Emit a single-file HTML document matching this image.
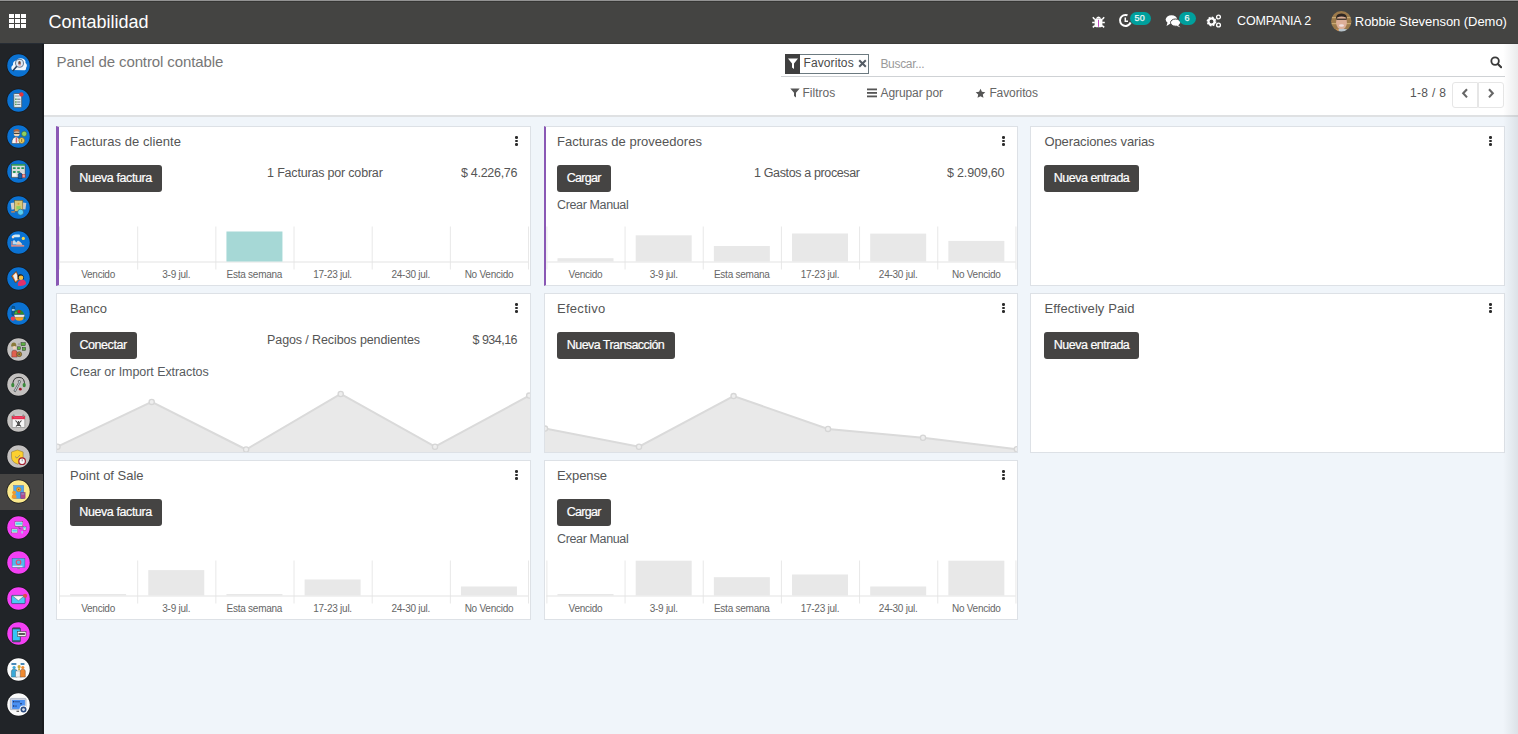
<!DOCTYPE html>
<html><head><meta charset="utf-8"><style>
*{margin:0;padding:0;box-sizing:border-box}
html,body{width:1518px;height:734px;overflow:hidden;background:#f0f5fa;font-family:"Liberation Sans",sans-serif}
.a{position:absolute}
.t{position:absolute;line-height:1;white-space:nowrap}
.card{position:absolute;background:#fff;border:1px solid #dde1e6;height:160px}
.btn{position:absolute;height:27px;background:#454443;border-radius:3px;color:#fff;font-size:12.5px;line-height:27px;text-align:center;white-space:nowrap}
.dots{position:absolute;width:3px;height:10px}
.dots i{position:absolute;left:0.2px;width:2.6px;height:2.6px;border-radius:50%;background:#2b2b2b}
.ic{position:absolute;width:23px;height:23px;border-radius:50%;overflow:hidden}
</style></head><body>
<div class="a" style="left:0;top:0;width:1518px;height:43px;background:#444442"></div>
<div class="a" style="left:0;top:0;width:1518px;height:1px;background:#939393"></div>
<div class="a" style="left:0;top:1px;width:1518px;height:1px;background:#363634"></div>
<div class="a" style="left:9px;top:14px;width:5px;height:4px;background:#fff"></div>
<div class="a" style="left:15px;top:14px;width:5px;height:4px;background:#fff"></div>
<div class="a" style="left:21px;top:14px;width:5px;height:4px;background:#fff"></div>
<div class="a" style="left:9px;top:19px;width:5px;height:4px;background:#fff"></div>
<div class="a" style="left:15px;top:19px;width:5px;height:4px;background:#fff"></div>
<div class="a" style="left:21px;top:19px;width:5px;height:4px;background:#fff"></div>
<div class="a" style="left:9px;top:24px;width:5px;height:4px;background:#fff"></div>
<div class="a" style="left:15px;top:24px;width:5px;height:4px;background:#fff"></div>
<div class="a" style="left:21px;top:24px;width:5px;height:4px;background:#fff"></div>
<div class="t" style="left:48.5px;top:13.0px;font-size:18px;color:#fff;">Contabilidad</div>
<svg class="a" style="left:1092px;top:14.5px" width="13" height="13" viewBox="0 0 13 13">
<path d="M3.8 3.6 Q6.5 -0.6 9.2 3.6z" fill="#fff"/><rect x="2.6" y="3.6" width="7.8" height="8.6" rx="1.6" fill="#fff"/>
<path d="M0.8 2.2 L2.8 4.6 M12.2 2.2 L10.2 4.6 M0.2 7.6 H2.8 M12.8 7.6 H10.2 M0.8 12.4 L2.8 10.6 M12.2 12.4 L10.2 10.6" stroke="#fff" stroke-width="1.5"/>
<rect x="6" y="4.8" width="1" height="7" fill="#c04ac0"/></svg>
<svg class="a" style="left:1118px;top:13px" width="15" height="15" viewBox="0 0 15 15">
<path d="M12.6 9.5 A5.5 5.5 0 1 1 9.5 2.3" fill="none" stroke="#fff" stroke-width="2"/>
<path d="M7.3 4.5 V8.3 H10" fill="none" stroke="#fff" stroke-width="1.5"/></svg>
<div class="a" style="left:1129.5px;top:11.8px;width:21.5px;height:13.2px;border-radius:7px;background:#00a09d"></div>
<div class="t" style="left:1134.5px;top:13.6px;font-size:9px;color:#eef8f8;letter-spacing:0.2px;-webkit-text-stroke:0.25px #eef8f8">50</div>
<svg class="a" style="left:1165px;top:14px" width="17" height="14" viewBox="0 0 17 14">
<ellipse cx="6.5" cy="5.5" rx="5.8" ry="4.3" fill="#fff"/><path d="M2.5 8.5 L1.5 12 L6 9.2z" fill="#fff"/>
<ellipse cx="10.5" cy="8.6" rx="5" ry="3.6" fill="#fff" stroke="#454443" stroke-width="1"/><path d="M13 11 L15.5 13.5 L11 11.5z" fill="#fff"/></svg>
<div class="a" style="left:1178.5px;top:11.8px;width:17px;height:13.2px;border-radius:7px;background:#00a09d"></div>
<div class="t" style="left:1184.5px;top:13.6px;font-size:9px;color:#eef8f8;-webkit-text-stroke:0.25px #eef8f8">6</div>
<svg class="a" style="left:1206px;top:14px" width="16" height="14" viewBox="0 0 16 14">
<circle cx="5.5" cy="7.5" r="3.6" fill="none" stroke="#fff" stroke-width="2.6" stroke-dasharray="1.6 1.2"/>
<circle cx="5.5" cy="7.5" r="3" fill="none" stroke="#fff" stroke-width="2"/>
<circle cx="12.5" cy="3" r="1.9" fill="none" stroke="#fff" stroke-width="1.4"/>
<circle cx="12.5" cy="11" r="1.9" fill="none" stroke="#fff" stroke-width="1.4"/></svg>
<div class="t" style="left:1237.0px;top:15.3px;font-size:12.5px;color:#fff;letter-spacing:-0.15px">COMPANIA 2</div>
<svg class="a" style="left:1330.5px;top:10.5px" width="21" height="21" viewBox="0 0 21 21">
<defs><clipPath id="av"><circle cx="10.3" cy="10.3" r="10.2"/></clipPath><filter id="bl"><feGaussianBlur stdDeviation="0.6"/></filter></defs>
<g clip-path="url(#av)"><g filter="url(#bl)"><rect width="21" height="21" fill="#9c7a4c"/><rect x="0" y="6" width="21" height="1.2" fill="#c8a870"/><rect x="0" y="12" width="21" height="1.2" fill="#c8a870"/>
<ellipse cx="10.5" cy="11.5" rx="5.4" ry="7" fill="#dcae98"/><path d="M4.8 9 Q4.5 2.5 10.5 2.6 Q16.5 2.5 16 9 L15 6.5 Q10.5 4.5 6 6.5z" fill="#2e2824"/>
<rect x="5.5" y="7.6" width="10" height="1.3" fill="#3a302a"/><ellipse cx="10.5" cy="14.5" rx="2.5" ry="1.3" fill="#f0e0e0"/>
<path d="M3 21 Q5 17 10 18 Q16 17 19 21z" fill="#b8c4cc"/><path d="M3 21 Q4 17.5 7.5 17.5 L8 21z" fill="#c08a50"/></g></g></svg>
<div class="t" style="left:1354.8px;top:14.9px;font-size:13px;color:#fff;letter-spacing:-0.05px">Robbie Stevenson (Demo)</div>
<div class="a" style="left:0;top:43px;width:44px;height:691px;background:#212428"></div>
<div class="a" style="left:42px;top:43px;width:2px;height:691px;background:#1a1c1f"></div>
<div class="a" style="left:0;top:474px;width:43px;height:35.5px;background:#454443"></div>
<svg class="a" style="left:6.25px;top:52.50px" width="25" height="25" viewBox="-0.5 -0.5 25 25"><circle cx="12" cy="12" r="12" fill="#17191c"/><circle cx="12" cy="12" r="11.25" fill="#0b72d2"/><path d="M5.5 16.5 Q3.8 13 6.5 11.5 Q6 7.5 10 7 Q12 3.8 16 5 Q19.5 6 19 9.5 Q21.5 11.5 19.5 14.5 Q20 16.8 17 16.8 Z" fill="#f0f6fc"/><circle cx="13" cy="9.8" r="4" fill="#dce9f5" stroke="#6a7f98" stroke-width="1.1"/><ellipse cx="13" cy="9.4" rx="1.3" ry="1.8" fill="#6a4a3a"/><ellipse cx="13.2" cy="11.2" rx="1.2" ry="0.9" fill="#e08a8a"/><path d="M10.3 12.7 L6.2 17.6" stroke="#27405e" stroke-width="1.6"/></svg>
<svg class="a" style="left:6.25px;top:88.05px" width="25" height="25" viewBox="-0.5 -0.5 25 25"><circle cx="12" cy="12" r="12" fill="#17191c"/><circle cx="12" cy="12" r="11.25" fill="#0b72d2"/><rect x="7.3" y="5" width="7.9" height="13.9" rx="0.8" fill="#e3edf2" stroke="#4a5560" stroke-width="0.8"/><rect x="8.5" y="7" width="4.5" height="1" fill="#8a98a6"/><rect x="8.7" y="10" width="1.4" height="1.4" fill="#3f8a3a"/><rect x="10.6" y="10.2" width="3.3" height="1" fill="#6a7886"/><rect x="8.7" y="12.8" width="1.4" height="1.4" fill="#3f8a3a"/><rect x="10.6" y="13" width="3.3" height="1" fill="#6a7886"/><rect x="8.7" y="15.2" width="1.4" height="1.4" fill="#3f8a3a"/><rect x="10.6" y="15.4" width="3.3" height="1" fill="#6a7886"/><circle cx="14.9" cy="5.9" r="2.2" fill="#e2343c"/></svg>
<svg class="a" style="left:6.25px;top:123.60px" width="25" height="25" viewBox="-0.5 -0.5 25 25"><circle cx="12" cy="12" r="12" fill="#17191c"/><circle cx="12" cy="12" r="11.25" fill="#0b72d2"/><path d="M5.3 19 Q5.3 12.5 9.4 12.5 Q13.5 12.5 13.5 19Z" fill="#f4f4f4" stroke="#3a3a3a" stroke-width="0.5"/><rect x="9.2" y="13.2" width="1.5" height="5" fill="#d8606a"/><ellipse cx="10.2" cy="9.2" rx="2.9" ry="2.6" fill="#efd3b5"/><path d="M6.8 8.5 Q6.5 4.5 10.2 4.6 Q13.8 4.5 13.5 8.5 L13.2 7 L7.1 7z" fill="#b5643a"/><rect x="7.2" y="8.3" width="6" height="1.1" fill="#333"/><circle cx="15.2" cy="16" r="2.9" fill="#f0cf60" stroke="#6e5a22" stroke-width="0.6"/><rect x="14.7" y="14.5" width="1" height="3" fill="#8a7030"/><circle cx="17.7" cy="9.3" r="2.6" fill="#8ed060" stroke="#3a5a2a" stroke-width="0.5"/></svg>
<svg class="a" style="left:6.25px;top:159.15px" width="25" height="25" viewBox="-0.5 -0.5 25 25"><circle cx="12" cy="12" r="12" fill="#17191c"/><circle cx="12" cy="12" r="11.25" fill="#0b72d2"/><rect x="5.1" y="4.7" width="13.5" height="13.4" fill="#d8dcdc" stroke="#333" stroke-width="0.5"/><rect x="5.1" y="4.7" width="13.5" height="1.5" fill="#1f9a55"/><rect x="6.3" y="7.8" width="3" height="1.8" rx="0.8" fill="#23945a"/><rect x="10.5" y="7.8" width="3" height="1.8" rx="0.8" fill="#23945a"/><rect x="14.7" y="7.8" width="3" height="1.8" rx="0.8" fill="#23945a"/><rect x="6.3" y="11.6" width="3" height="1.8" rx="0.8" fill="#23945a"/><rect x="10.5" y="11.6" width="3" height="1.8" rx="0.8" fill="#3aa070"/><rect x="5.5" y="13.9" width="4.4" height="2.8" fill="#f4f4f4"/><path d="M11.7 19 V14.5 Q13.6 12 15.6 14.5 V19z" fill="#1a5fa8" stroke="#0d2a4a" stroke-width="0.5"/><rect x="15.8" y="15" width="2.8" height="3.1" fill="#e8a0a0" stroke="#b03030" stroke-width="0.5"/></svg>
<svg class="a" style="left:6.25px;top:194.70px" width="25" height="25" viewBox="-0.5 -0.5 25 25"><circle cx="12" cy="12" r="12" fill="#17191c"/><circle cx="12" cy="12" r="11.25" fill="#0b72d2"/><rect x="4.6" y="7.2" width="3.8" height="6.7" fill="#d0d0d0" transform="rotate(-8 6.5 10.5)"/><rect x="15.8" y="7.2" width="3.6" height="6.7" fill="#c8c8c8" transform="rotate(8 17.6 10.5)"/><rect x="8.1" y="5" width="8.2" height="10.7" fill="#d9c674" stroke="#6a5a2a" stroke-width="0.5"/><path d="M9.9 10.6 L14.1 10.6 L14.1 13.9 L9.9 13.9z" fill="#8fd060"/><circle cx="12" cy="8.2" r="1" fill="#e0a030"/><rect x="4.6" y="15.7" width="3.9" height="1.4" rx="0.6" fill="#d8884a"/><circle cx="14.1" cy="16.7" r="3" fill="#55d0f5" stroke="#3a5870" stroke-width="0.6"/></svg>
<svg class="a" style="left:6.25px;top:230.25px" width="25" height="25" viewBox="-0.5 -0.5 25 25"><circle cx="12" cy="12" r="12" fill="#17191c"/><circle cx="12" cy="12" r="11.25" fill="#0b72d2"/><path d="M5.5 6.5 Q6 4 9 4 L13 4 Q14.2 5.4 13 6.8 L8 6.8 Q6 6.8 5.5 6.5z" fill="#cdeafa"/><circle cx="6.5" cy="6.6" r="1.3" fill="#f8d8c0"/><circle cx="16.8" cy="7.9" r="1.6" fill="#f6d54a"/><path d="M6.3 13.9 Q6 10 7.5 9.6 Q9 10.5 9.6 12 L11.5 10 L13.5 11.2 L15.9 13.9z" fill="#bcdaf0"/><path d="M9.6 13.9 L11.5 11 L13.3 11.6 L15.9 13.9z" fill="#f0c8b0"/><rect x="4.9" y="14.6" width="12.8" height="1.5" fill="#e98c80"/><rect x="4.9" y="10.5" width="1.1" height="5.5" fill="#e98c80"/></svg>
<svg class="a" style="left:6.25px;top:265.80px" width="25" height="25" viewBox="-0.5 -0.5 25 25"><circle cx="12" cy="12" r="12" fill="#17191c"/><circle cx="12" cy="12" r="11.25" fill="#0b72d2"/><path d="M5 9.5 L9.8 4.8 L13 12.5 L9 16.5z" fill="#e87a28" stroke="#3a2a1a" stroke-width="0.5"/><path d="M6.5 9.3 L9.6 6.3 L11.8 12 L9.2 14.7z" fill="#f0f0f0"/><path d="M11 10.5 Q11 7.5 14 7.8 Q17 8 17.5 11.5 L17 13 L11 12.5z" fill="#222"/><circle cx="14.5" cy="11.2" r="2.3" fill="#f6c040"/><path d="M11.3 19.3 Q10.8 14 15 13.4 Q19.5 13 19.5 17.5 Q17 20 11.3 19.3z" fill="#e2306a"/></svg>
<svg class="a" style="left:6.25px;top:301.35px" width="25" height="25" viewBox="-0.5 -0.5 25 25"><circle cx="12" cy="12" r="12" fill="#17191c"/><circle cx="12" cy="12" r="11.25" fill="#0b72d2"/><rect x="5.4" y="4.8" width="2.8" height="9" rx="0.8" fill="#0d5f9a" stroke="#0a2a44" stroke-width="0.4"/><rect x="5.4" y="7.8" width="2.8" height="1.3" fill="#d8eef8"/><path d="M7.4 13 Q8 8 12 8.3 Q16 8 17.8 13z" fill="#2d8a2d"/><circle cx="12.5" cy="10.2" r="1.6" fill="#c8202a"/><circle cx="9.5" cy="11.3" r="1" fill="#5ab040"/><path d="M7.4 13.2 H18.4 L17.5 15.7 H8.2z" fill="#f8f8f8" stroke="#444" stroke-width="0.4"/><path d="M8.5 15.7 H17 Q17.2 19.2 12.8 19.2 Q8.5 19.2 8.5 15.7z" fill="#f4a020"/><circle cx="6.4" cy="17.1" r="2.2" fill="#ef4050"/><path d="M17.5 15 L19.3 16.5 L17.8 18.5z" fill="#2a7a2a"/></svg>
<svg class="a" style="left:6.25px;top:336.90px" width="25" height="25" viewBox="-0.5 -0.5 25 25"><circle cx="12" cy="12" r="12" fill="#17191c"/><circle cx="12" cy="12" r="11.25" fill="#c3c1c0"/><path d="M4.6 9 Q4.6 5 7.3 5 Q10 5 9.9 9z" fill="#8a7a3a"/><ellipse cx="7.9" cy="10.2" rx="1.6" ry="1.7" fill="#f2d2b5"/><path d="M5.3 19.6 V14.5 Q5.3 12.8 7.8 12.8 Q10.6 12.8 10.6 15 V19.6z" fill="#e0604e" stroke="#5a2a2a" stroke-width="0.4"/><circle cx="12.7" cy="16.7" r="2.5" fill="#a8883a" stroke="#4a3a1a" stroke-width="0.5"/><circle cx="12.7" cy="16.7" r="0.9" fill="#555"/><rect x="14.5" y="5.2" width="4.2" height="3" fill="#5cb040" stroke="#2a3a2a" stroke-width="0.5"/><rect x="10.9" y="9.3" width="2.9" height="2.8" fill="#5cb040" stroke="#2a3a2a" stroke-width="0.5"/><rect x="15.9" y="10" width="3.2" height="2.8" fill="#5cb040" stroke="#2a3a2a" stroke-width="0.5"/><rect x="11.3" y="5.8" width="2.4" height="2" fill="#a0a0a0"/></svg>
<svg class="a" style="left:6.25px;top:372.45px" width="25" height="25" viewBox="-0.5 -0.5 25 25"><circle cx="12" cy="12" r="12" fill="#17191c"/><circle cx="12" cy="12" r="11.25" fill="#c3c1c0"/><path d="M6.5 13.5 Q5.5 5 12.5 4.8 Q19 5 17.8 13.5" fill="none" stroke="#333" stroke-width="1"/><ellipse cx="6.3" cy="12.6" rx="1.6" ry="2.2" fill="#3a8a3a"/><ellipse cx="17.7" cy="12.6" rx="1.6" ry="2.2" fill="#3a8a3a"/><path d="M7.4 18.5 L12.2 10 L11.6 8.3 L13.4 7.9 L14 9.4 L13.3 10.8 L8.9 19.3z" fill="#cfe2ec" stroke="#333" stroke-width="0.6"/><circle cx="13.8" cy="16.7" r="1.4" fill="#a01a2a"/></svg>
<svg class="a" style="left:6.25px;top:408.00px" width="25" height="25" viewBox="-0.5 -0.5 25 25"><circle cx="12" cy="12" r="12" fill="#17191c"/><circle cx="12" cy="12" r="11.25" fill="#c3c1c0"/><rect x="5.6" y="7.5" width="12.8" height="11.7" fill="#f6f6f6" stroke="#666" stroke-width="0.5"/><rect x="5.3" y="7.5" width="13.1" height="3.2" fill="#e0304a"/><rect x="7.5" y="8.2" width="9" height="1.6" fill="#f2406a"/><rect x="6.6" y="6" width="1.2" height="2.5" fill="#888"/><rect x="16.2" y="6" width="1.2" height="2.5" fill="#888"/><rect x="8.5" y="6.3" width="7" height="0.8" fill="#ddd"/><path d="M9 12 L14.5 18 M15 12 L9.5 18 M12 12.5 V17.5" stroke="#444" stroke-width="1.1"/><circle cx="12" cy="14.8" r="1.4" fill="#555"/></svg>
<svg class="a" style="left:6.25px;top:443.55px" width="25" height="25" viewBox="-0.5 -0.5 25 25"><circle cx="12" cy="12" r="12" fill="#17191c"/><circle cx="12" cy="12" r="11.25" fill="#c3c1c0"/><path d="M11 5.5 L16.6 7.5 V12.5 Q16.6 17.5 11 19.6 Q5 17.5 5 12.5 V7.5z" fill="#fcd030" stroke="#8a7020" stroke-width="0.5"/><path d="M8.5 12 L10.5 13.6 L13.5 10.5" fill="none" stroke="#9a9070" stroke-width="1"/><circle cx="15.6" cy="16.7" r="3.3" fill="#f4f6f8" stroke="#a02030" stroke-width="1.2"/><rect x="15.3" y="14.8" width="0.7" height="2" fill="#666"/></svg>
<svg class="a" style="left:6.25px;top:479.10px" width="25" height="25" viewBox="-0.5 -0.5 25 25"><circle cx="12" cy="12" r="12" fill="#17191c"/><circle cx="12" cy="12" r="11.25" fill="#fbe98c"/><rect x="7.2" y="5.9" width="10" height="13.1" fill="#4aa8f0"/><rect x="7.2" y="5.9" width="10" height="13.1" fill="none" stroke="#5a6aa0" stroke-width="0.4"/><circle cx="12.2" cy="10" r="2.3" fill="#f0a020" stroke="#c07010" stroke-width="0.4"/><rect x="11.6" y="9.4" width="1.2" height="1.2" fill="#8a5a20"/><circle cx="7.6" cy="13.1" r="1.9" fill="#f09a2a"/><path d="M5.3 19 V16.5 Q5.3 14.8 7.6 14.8 Q9.9 14.8 9.9 16.5 V19z" fill="#f09a2a"/><rect x="14.3" y="13" width="4.3" height="6" fill="#b04a90" stroke="#6a2a6a" stroke-width="0.4"/><rect x="15" y="14" width="2.8" height="0.9" fill="#7ab0e0"/></svg>
<svg class="a" style="left:6.25px;top:514.65px" width="25" height="25" viewBox="-0.5 -0.5 25 25"><circle cx="12" cy="12" r="12" fill="#17191c"/><circle cx="12" cy="12" r="11.25" fill="#f440f4"/><rect x="8.5" y="6.1" width="7.8" height="4.6" fill="#f4f6f6" stroke="#555" stroke-width="0.4"/><rect x="9.2" y="6.9" width="6.4" height="2.4" fill="#50d8e8"/><rect x="8.5" y="10.3" width="7.8" height="0.6" fill="#777"/><rect x="5.1" y="13.5" width="6" height="3.9" fill="#f4f6f6" stroke="#555" stroke-width="0.4"/><rect x="5.8" y="14.2" width="4.6" height="2" fill="#50d8e8"/><rect x="16.6" y="11" width="2.9" height="3.6" fill="#e6eeee" stroke="#555" stroke-width="0.4"/><rect x="16.9" y="11.4" width="2.3" height="1.5" fill="#50d8e8"/><rect x="14.9" y="15.5" width="1.4" height="2.5" fill="#a0dde0"/><path d="M12.5 11 L12.5 13 L15 13.5" fill="none" stroke="#444" stroke-width="0.5"/></svg>
<svg class="a" style="left:6.25px;top:550.20px" width="25" height="25" viewBox="-0.5 -0.5 25 25"><circle cx="12" cy="12" r="12" fill="#17191c"/><circle cx="12" cy="12" r="11.25" fill="#f440f4"/><rect x="5.6" y="7.9" width="12.8" height="8.8" fill="#50b8ec" stroke="#3a6a9a" stroke-width="0.5"/><circle cx="12" cy="11.8" r="2.3" fill="none" stroke="#e0506a" stroke-width="1.1"/><rect x="6" y="15.2" width="10" height="1.4" fill="#d8e8f0"/><rect x="10.8" y="16.7" width="2.6" height="2" fill="#8a8a9a"/></svg>
<svg class="a" style="left:6.25px;top:585.75px" width="25" height="25" viewBox="-0.5 -0.5 25 25"><circle cx="12" cy="12" r="12" fill="#17191c"/><circle cx="12" cy="12" r="11.25" fill="#f440f4"/><rect x="5.1" y="8.9" width="13.5" height="8.2" rx="0.6" fill="#4ccaf4" stroke="#1a3a5a" stroke-width="0.6"/><path d="M5.8 9.3 L11.9 14.2 L17.9 9.3z" fill="#f8f8f8" stroke="#2a3a4a" stroke-width="0.4"/><circle cx="18.6" cy="9.3" r="2.1" fill="#e04a50"/></svg>
<svg class="a" style="left:6.25px;top:621.30px" width="25" height="25" viewBox="-0.5 -0.5 25 25"><circle cx="12" cy="12" r="12" fill="#17191c"/><circle cx="12" cy="12" r="11.25" fill="#f440f4"/><rect x="5.9" y="6.4" width="7.9" height="13.9" rx="0.9" fill="#35c4f6" stroke="#2a2a3a" stroke-width="0.7"/><rect x="5.9" y="6.4" width="7.9" height="1.4" fill="#3a4a5a"/><rect x="5.9" y="18.8" width="7.9" height="1.4" fill="#3a4a5a"/><rect x="10.9" y="10" width="8.6" height="5" fill="#f0f0ee" stroke="#333" stroke-width="0.5"/><rect x="12" y="11.7" width="6.4" height="1.6" fill="#333"/></svg>
<svg class="a" style="left:6.25px;top:656.85px" width="25" height="25" viewBox="-0.5 -0.5 25 25"><circle cx="12" cy="12" r="12" fill="#17191c"/><circle cx="12" cy="12" r="11.25" fill="#fbfbfb"/><rect x="4.9" y="5.4" width="5" height="2.1" rx="0.6" fill="#4a8ab8"/><rect x="14.1" y="5.4" width="3.9" height="2.1" rx="0.6" fill="#4a8ab8"/><circle cx="7.6" cy="10" r="1.6" fill="#3aa8d8"/><path d="M4.9 19.6 V13.5 Q4.9 11.8 7.6 11.8 Q10.6 11.8 10.6 13.5 V19.6z" fill="#3aa8d8" stroke="#2a4a5a" stroke-width="0.4"/><circle cx="12.6" cy="9.2" r="1.6" fill="#c8a83a"/><rect x="11.7" y="10.8" width="1.8" height="2" fill="#c8a83a"/><rect x="9.3" y="13.5" width="5.7" height="6" fill="#f0f0f0" stroke="#777" stroke-width="0.4"/><circle cx="16.3" cy="10" r="1.6" fill="#f08a30"/><path d="M13.8 19.6 V13.5 Q13.8 11.8 16.3 11.8 Q18.8 11.8 18.8 13.5 V19.6z" fill="#f08a30" stroke="#5a3a2a" stroke-width="0.4"/></svg>
<svg class="a" style="left:6.25px;top:692.40px" width="25" height="25" viewBox="-0.5 -0.5 25 25"><circle cx="12" cy="12" r="12" fill="#17191c"/><circle cx="12" cy="12" r="11.25" fill="#fbfbfb"/><rect x="3.8" y="5.9" width="15.8" height="11.3" rx="0.8" fill="#c8d0e0" stroke="#8a94a8" stroke-width="0.5"/><rect x="5.6" y="7.5" width="12.8" height="8.9" fill="#4a90f2"/><circle cx="7.2" cy="9.3" r="0.8" fill="#1a2a5a"/><rect x="8.5" y="9" width="5" height="0.7" fill="#1a3a7a"/><circle cx="7.2" cy="13.5" r="0.8" fill="#1a2a5a"/><rect x="8.5" y="13.2" width="2" height="0.7" fill="#1a3a7a"/><circle cx="14.5" cy="11.3" r="0.8" fill="#1a2a5a"/><rect x="10" y="18.2" width="2.6" height="1.2" fill="#555"/><circle cx="17" cy="17.1" r="4" fill="#fbfbfb"/><circle cx="17" cy="17.1" r="3" fill="#2a4a80"/><circle cx="17" cy="17.1" r="1.4" fill="#d8e0ea"/></svg>
<div class="a" style="left:44px;top:43px;width:1474px;height:73px;background:#fff"></div>
<div class="a" style="left:44px;top:43px;width:1474px;height:1px;background:#3c3c3a"></div>
<div class="a" style="left:0;top:43px;width:44px;height:1px;background:#262c34"></div>
<div class="a" style="left:44px;top:115px;width:1474px;height:1.5px;background:#dfe1e3"></div>
<div class="t" style="left:56.5px;top:54.3px;font-size:15px;color:#777;letter-spacing:-0.1px">Panel de control contable</div>
<div class="a" style="left:785px;top:53.5px;width:84px;height:20px;border:1px solid #6c7a80;background:#fff"></div>
<div class="a" style="left:785px;top:53.5px;width:14.5px;height:20px;background:#3f3f3f"></div>
<svg class="a" style="left:786.5px;top:57px" width="12" height="13" viewBox="0 0 12 13">
<path d="M1 1.5 H11 L7 6.5 V12 L5 10.5 V6.5z" fill="#fff"/></svg>
<div class="t" style="left:803.5px;top:57.3px;font-size:12px;color:#4a4a4a;letter-spacing:0.1px">Favoritos</div>
<svg class="a" style="left:857.5px;top:58.5px" width="9" height="9" viewBox="0 0 9 9">
<path d="M1.2 1.2 L7.8 7.8 M7.8 1.2 L1.2 7.8" stroke="#555d66" stroke-width="2"/></svg>
<div class="t" style="left:880.4px;top:58.0px;font-size:12px;color:#9a9a9a;letter-spacing:-0.3px">Buscar...</div>
<div class="a" style="left:781px;top:76px;width:724px;height:1px;background:#cfd2d5"></div>
<svg class="a" style="left:1489.5px;top:56px" width="12.5" height="12.5" viewBox="0 0 13 13">
<circle cx="5.3" cy="5.3" r="3.9" fill="none" stroke="#3a3a3a" stroke-width="1.9"/><path d="M8.2 8.2 L11.6 11.6" stroke="#3a3a3a" stroke-width="2.2" stroke-linecap="round"/></svg>
<svg class="a" style="left:789.5px;top:88px" width="10" height="10" viewBox="0 0 10 10">
<path d="M0.3 0.5 H9.7 L6 4.8 V9.5 L4 8 V4.8z" fill="#555"/></svg>
<div class="t" style="left:802.5px;top:87.3px;font-size:12px;color:#666;">Filtros</div>
<svg class="a" style="left:867px;top:88px" width="10" height="10" viewBox="0 0 10 10">
<rect x="0" y="0.5" width="10" height="1.8" fill="#555"/><rect x="0" y="4" width="10" height="1.8" fill="#555"/><rect x="0" y="7.5" width="10" height="1.8" fill="#555"/></svg>
<div class="t" style="left:880.6px;top:87.3px;font-size:12px;color:#666;letter-spacing:-0.1px">Agrupar por</div>
<svg class="a" style="left:974.5px;top:87.5px" width="11" height="11" viewBox="0 0 24 24">
<path d="M12 1.5 L15.1 8.2 L22.5 9 L17 14 L18.5 21.5 L12 17.8 L5.5 21.5 L7 14 L1.5 9 L8.9 8.2z" fill="#555"/></svg>
<div class="t" style="left:989.4px;top:87.3px;font-size:12px;color:#666;letter-spacing:-0.1px">Favoritos</div>
<div class="t" style="left:1410.0px;top:87.2px;font-size:12px;color:#555;letter-spacing:0.3px">1-8 / 8</div>
<div class="a" style="left:1452px;top:81.5px;width:26px;height:26px;border:1px solid #e6e6e6;border-radius:3px 0 0 3px;background:#fff"></div>
<div class="a" style="left:1478px;top:81.5px;width:26px;height:26px;border:1px solid #e6e6e6;border-radius:0 3px 3px 0;background:#fff"></div>
<svg class="a" style="left:1461px;top:88px" width="8" height="11" viewBox="0 0 8 11">
<path d="M6 1.2 L2.2 5.3 L6 9.4" fill="none" stroke="#666" stroke-width="2.1"/></svg>
<svg class="a" style="left:1487px;top:88px" width="8" height="11" viewBox="0 0 8 11">
<path d="M2 1.2 L5.8 5.3 L2 9.4" fill="none" stroke="#666" stroke-width="2.1"/></svg>
<div class="card" style="left:56px;top:126px;width:475px;border-left:3px solid #8a58b5;"></div>
<div class="t" style="left:70.0px;top:135.4px;font-size:13px;color:#555;letter-spacing:0.061px">Facturas de cliente</div>
<div class="dots" style="left:515.0px;top:136px"><i style="top:0"></i><i style="top:3.6px"></i><i style="top:7.2px"></i></div>
<div class="btn" style="left:69.8px;top:164.8px;-webkit-text-stroke:0.2px #fff;line-height:26px;width:92px;letter-spacing:-0.402px;text-indent:-0.402px">Nueva factura</div>
<div class="t" style="left:267.1px;top:167.2px;font-size:12.5px;color:#555;letter-spacing:-0.19px">1 Facturas por cobrar</div>
<div class="t" style="right:1000.8px;top:167.2px;font-size:12.5px;color:#555;letter-spacing:-0.288px">$ 4.226,76</div>
<svg class="a" style="left:0;top:0" width="1518" height="734"><rect x="59.00" y="226.5" width="1" height="43.0" fill="#e8e8e8"/><rect x="137.17" y="226.5" width="1" height="43.0" fill="#e8e8e8"/><rect x="215.34" y="226.5" width="1" height="43.0" fill="#e8e8e8"/><rect x="293.51" y="226.5" width="1" height="43.0" fill="#e8e8e8"/><rect x="371.68" y="226.5" width="1" height="43.0" fill="#e8e8e8"/><rect x="449.85" y="226.5" width="1" height="43.0" fill="#e8e8e8"/><rect x="528.02" y="226.5" width="1" height="43.0" fill="#e8e8e8"/><rect x="59.00" y="261.5" width="469.02" height="1" fill="#e4e4e4"/><rect x="226.44" y="231.50" width="56" height="30.00" fill="#a6d8d6"/></svg>
<div class="t" style="left:59.0px;top:269.9px;width:78.17px;text-align:center;font-size:10px;color:#666;letter-spacing:-0.25px">Vencido</div>
<div class="t" style="left:137.2px;top:269.9px;width:78.17px;text-align:center;font-size:10px;color:#666;letter-spacing:-0.25px">3-9 jul.</div>
<div class="t" style="left:215.3px;top:269.9px;width:78.17px;text-align:center;font-size:10px;color:#666;letter-spacing:-0.25px">Esta semana</div>
<div class="t" style="left:293.5px;top:269.9px;width:78.17px;text-align:center;font-size:10px;color:#666;letter-spacing:-0.25px">17-23 jul.</div>
<div class="t" style="left:371.7px;top:269.9px;width:78.17px;text-align:center;font-size:10px;color:#666;letter-spacing:-0.25px">24-30 jul.</div>
<div class="t" style="left:449.9px;top:269.9px;width:78.17px;text-align:center;font-size:10px;color:#666;letter-spacing:-0.25px">No Vencido</div>
<div class="card" style="left:544px;top:126px;width:474px;border-left:2px solid #8a58b5;"></div>
<div class="t" style="left:557.0px;top:135.4px;font-size:13px;color:#555;letter-spacing:0.02px">Facturas de proveedores</div>
<div class="dots" style="left:1002.0px;top:136px"><i style="top:0"></i><i style="top:3.6px"></i><i style="top:7.2px"></i></div>
<div class="btn" style="left:556.8px;top:164.8px;-webkit-text-stroke:0.2px #fff;line-height:26px;width:54.5px;letter-spacing:-0.704px;text-indent:-0.704px">Cargar</div>
<div class="t" style="left:754.0px;top:167.2px;font-size:12.5px;color:#555;letter-spacing:-0.365px">1 Gastos a procesar</div>
<div class="t" style="right:513.7px;top:167.2px;font-size:12.5px;color:#555;letter-spacing:-0.177px">$ 2.909,60</div>
<div class="t" style="left:557.0px;top:198.7px;font-size:12.5px;color:#575b60;letter-spacing:-0.367px">Crear Manual</div>
<svg class="a" style="left:0;top:0" width="1518" height="734"><rect x="546.40" y="226.5" width="1" height="43.0" fill="#e8e8e8"/><rect x="624.57" y="226.5" width="1" height="43.0" fill="#e8e8e8"/><rect x="702.74" y="226.5" width="1" height="43.0" fill="#e8e8e8"/><rect x="780.91" y="226.5" width="1" height="43.0" fill="#e8e8e8"/><rect x="859.08" y="226.5" width="1" height="43.0" fill="#e8e8e8"/><rect x="937.25" y="226.5" width="1" height="43.0" fill="#e8e8e8"/><rect x="1015.42" y="226.5" width="1" height="43.0" fill="#e8e8e8"/><rect x="546.40" y="261.5" width="469.02" height="1" fill="#e4e4e4"/><rect x="557.50" y="258.20" width="56" height="3.30" fill="#e8e8e8"/><rect x="635.67" y="235.30" width="56" height="26.20" fill="#e8e8e8"/><rect x="713.84" y="246.00" width="56" height="15.50" fill="#e8e8e8"/><rect x="792.01" y="233.50" width="56" height="28.00" fill="#e8e8e8"/><rect x="870.18" y="233.60" width="56" height="27.90" fill="#e8e8e8"/><rect x="948.35" y="240.90" width="56" height="20.60" fill="#e8e8e8"/></svg>
<div class="t" style="left:546.4px;top:269.9px;width:78.17px;text-align:center;font-size:10px;color:#666;letter-spacing:-0.25px">Vencido</div>
<div class="t" style="left:624.6px;top:269.9px;width:78.17px;text-align:center;font-size:10px;color:#666;letter-spacing:-0.25px">3-9 jul.</div>
<div class="t" style="left:702.7px;top:269.9px;width:78.17px;text-align:center;font-size:10px;color:#666;letter-spacing:-0.25px">Esta semana</div>
<div class="t" style="left:780.9px;top:269.9px;width:78.17px;text-align:center;font-size:10px;color:#666;letter-spacing:-0.25px">17-23 jul.</div>
<div class="t" style="left:859.1px;top:269.9px;width:78.17px;text-align:center;font-size:10px;color:#666;letter-spacing:-0.25px">24-30 jul.</div>
<div class="t" style="left:937.2px;top:269.9px;width:78.17px;text-align:center;font-size:10px;color:#666;letter-spacing:-0.25px">No Vencido</div>
<div class="card" style="left:1030px;top:126px;width:475px;"></div>
<div class="t" style="left:1044.5px;top:135.4px;font-size:13px;color:#555;letter-spacing:-0.111px">Operaciones varias</div>
<div class="dots" style="left:1489.0px;top:136px"><i style="top:0"></i><i style="top:3.6px"></i><i style="top:7.2px"></i></div>
<div class="btn" style="left:1044.3px;top:164.8px;-webkit-text-stroke:0.2px #fff;line-height:26px;width:95px;letter-spacing:-0.501px;text-indent:-0.501px">Nueva entrada</div>
<div class="card" style="left:56px;top:293px;width:475px;"></div>
<div class="t" style="left:70.0px;top:302.4px;font-size:13px;color:#555;letter-spacing:0.025px">Banco</div>
<div class="dots" style="left:515.0px;top:303px"><i style="top:0"></i><i style="top:3.6px"></i><i style="top:7.2px"></i></div>
<div class="btn" style="left:69.8px;top:331.8px;-webkit-text-stroke:0.2px #fff;line-height:26px;width:67px;letter-spacing:-0.433px;text-indent:-0.433px">Conectar</div>
<div class="t" style="left:267.1px;top:334.2px;font-size:12.5px;color:#555;letter-spacing:-0.107px">Pagos / Recibos pendientes</div>
<div class="t" style="right:1001.0px;top:334.2px;font-size:12.5px;color:#555;letter-spacing:-0.525px">$ 934,16</div>
<div class="t" style="left:70.0px;top:365.7px;font-size:12.5px;color:#575b60;letter-spacing:-0.068px">Crear or Import Extractos</div>
<svg class="a" style="left:57px;top:294px" width="473" height="158" viewBox="57 294 473 158">
<path d="M57 446.7 L57.5 446.7 L151.7 401.9 L246.1 449.5 L340.7 394.0 L435.0 446.7 L529.2 395.6 L531 395.6 L531 452 L57 452 Z" fill="#e9e9e9"/><path d="M57.5 446.7 L151.7 401.9 L246.1 449.5 L340.7 394.0 L435.0 446.7 L529.2 395.6" fill="none" stroke="#dadada" stroke-width="2"/><circle cx="57.5" cy="446.7" r="2.6" fill="#eeeeee" stroke="#d6d6d6" stroke-width="1.3"/><circle cx="151.7" cy="401.9" r="2.6" fill="#eeeeee" stroke="#d6d6d6" stroke-width="1.3"/><circle cx="246.1" cy="449.5" r="2.6" fill="#eeeeee" stroke="#d6d6d6" stroke-width="1.3"/><circle cx="340.7" cy="394" r="2.6" fill="#eeeeee" stroke="#d6d6d6" stroke-width="1.3"/><circle cx="435" cy="446.7" r="2.6" fill="#eeeeee" stroke="#d6d6d6" stroke-width="1.3"/><circle cx="529.2" cy="395.6" r="2.6" fill="#eeeeee" stroke="#d6d6d6" stroke-width="1.3"/></svg>
<div class="card" style="left:544px;top:293px;width:474px;"></div>
<div class="t" style="left:557.0px;top:302.4px;font-size:13px;color:#555;letter-spacing:0.281px">Efectivo</div>
<div class="dots" style="left:1002.0px;top:303px"><i style="top:0"></i><i style="top:3.6px"></i><i style="top:7.2px"></i></div>
<div class="btn" style="left:556.8px;top:331.8px;-webkit-text-stroke:0.2px #fff;line-height:26px;width:118px;letter-spacing:-0.563px;text-indent:-0.563px">Nueva Transacción</div>
<svg class="a" style="left:545px;top:294px" width="472" height="158" viewBox="545 294 472 158">
<path d="M545 428.6 L545.0 428.6 L639.0 446.7 L733.6 396.1 L828.0 428.9 L923.0 437.7 L1016.8 449.2 L1018 449.2 L1018 452 L545 452 Z" fill="#e9e9e9"/><path d="M545.0 428.6 L639.0 446.7 L733.6 396.1 L828.0 428.9 L923.0 437.7 L1016.8 449.2" fill="none" stroke="#dadada" stroke-width="2"/><circle cx="545" cy="428.6" r="2.6" fill="#eeeeee" stroke="#d6d6d6" stroke-width="1.3"/><circle cx="639" cy="446.7" r="2.6" fill="#eeeeee" stroke="#d6d6d6" stroke-width="1.3"/><circle cx="733.6" cy="396.1" r="2.6" fill="#eeeeee" stroke="#d6d6d6" stroke-width="1.3"/><circle cx="828" cy="428.9" r="2.6" fill="#eeeeee" stroke="#d6d6d6" stroke-width="1.3"/><circle cx="923" cy="437.7" r="2.6" fill="#eeeeee" stroke="#d6d6d6" stroke-width="1.3"/><circle cx="1016.8" cy="449.2" r="2.6" fill="#eeeeee" stroke="#d6d6d6" stroke-width="1.3"/></svg>
<div class="card" style="left:1030px;top:293px;width:475px;"></div>
<div class="t" style="left:1044.5px;top:302.4px;font-size:13px;color:#555;letter-spacing:0.085px">Effectively Paid</div>
<div class="dots" style="left:1489.0px;top:303px"><i style="top:0"></i><i style="top:3.6px"></i><i style="top:7.2px"></i></div>
<div class="btn" style="left:1044.3px;top:331.8px;-webkit-text-stroke:0.2px #fff;line-height:26px;width:95px;letter-spacing:-0.501px;text-indent:-0.501px">Nueva entrada</div>
<div class="card" style="left:56px;top:460px;width:475px;"></div>
<div class="t" style="left:70.0px;top:469.4px;font-size:13px;color:#555;letter-spacing:-0.017px">Point of Sale</div>
<div class="dots" style="left:515.0px;top:470px"><i style="top:0"></i><i style="top:3.6px"></i><i style="top:7.2px"></i></div>
<div class="btn" style="left:69.8px;top:498.8px;-webkit-text-stroke:0.2px #fff;line-height:26px;width:92px;letter-spacing:-0.402px;text-indent:-0.402px">Nueva factura</div>
<svg class="a" style="left:0;top:0" width="1518" height="734"><rect x="59.00" y="560.5" width="1" height="43.0" fill="#e8e8e8"/><rect x="137.17" y="560.5" width="1" height="43.0" fill="#e8e8e8"/><rect x="215.34" y="560.5" width="1" height="43.0" fill="#e8e8e8"/><rect x="293.51" y="560.5" width="1" height="43.0" fill="#e8e8e8"/><rect x="371.68" y="560.5" width="1" height="43.0" fill="#e8e8e8"/><rect x="449.85" y="560.5" width="1" height="43.0" fill="#e8e8e8"/><rect x="528.02" y="560.5" width="1" height="43.0" fill="#e8e8e8"/><rect x="59.00" y="595.5" width="469.02" height="1" fill="#e4e4e4"/><rect x="70.10" y="594.00" width="56" height="1.50" fill="#e8e8e8"/><rect x="148.27" y="570.10" width="56" height="25.40" fill="#e8e8e8"/><rect x="226.44" y="594.00" width="56" height="1.50" fill="#e8e8e8"/><rect x="304.61" y="579.50" width="56" height="16.00" fill="#e8e8e8"/><rect x="460.95" y="586.50" width="56" height="9.00" fill="#e8e8e8"/></svg>
<div class="t" style="left:59.0px;top:603.9px;width:78.17px;text-align:center;font-size:10px;color:#666;letter-spacing:-0.25px">Vencido</div>
<div class="t" style="left:137.2px;top:603.9px;width:78.17px;text-align:center;font-size:10px;color:#666;letter-spacing:-0.25px">3-9 jul.</div>
<div class="t" style="left:215.3px;top:603.9px;width:78.17px;text-align:center;font-size:10px;color:#666;letter-spacing:-0.25px">Esta semana</div>
<div class="t" style="left:293.5px;top:603.9px;width:78.17px;text-align:center;font-size:10px;color:#666;letter-spacing:-0.25px">17-23 jul.</div>
<div class="t" style="left:371.7px;top:603.9px;width:78.17px;text-align:center;font-size:10px;color:#666;letter-spacing:-0.25px">24-30 jul.</div>
<div class="t" style="left:449.9px;top:603.9px;width:78.17px;text-align:center;font-size:10px;color:#666;letter-spacing:-0.25px">No Vencido</div>
<div class="card" style="left:544px;top:460px;width:474px;"></div>
<div class="t" style="left:557.0px;top:469.4px;font-size:13px;color:#555;letter-spacing:-0.085px">Expense</div>
<div class="dots" style="left:1002.0px;top:470px"><i style="top:0"></i><i style="top:3.6px"></i><i style="top:7.2px"></i></div>
<div class="btn" style="left:556.8px;top:498.8px;-webkit-text-stroke:0.2px #fff;line-height:26px;width:54.5px;letter-spacing:-0.704px;text-indent:-0.704px">Cargar</div>
<div class="t" style="left:557.0px;top:532.7px;font-size:12.5px;color:#575b60;letter-spacing:-0.367px">Crear Manual</div>
<svg class="a" style="left:0;top:0" width="1518" height="734"><rect x="546.40" y="560.5" width="1" height="43.0" fill="#e8e8e8"/><rect x="624.57" y="560.5" width="1" height="43.0" fill="#e8e8e8"/><rect x="702.74" y="560.5" width="1" height="43.0" fill="#e8e8e8"/><rect x="780.91" y="560.5" width="1" height="43.0" fill="#e8e8e8"/><rect x="859.08" y="560.5" width="1" height="43.0" fill="#e8e8e8"/><rect x="937.25" y="560.5" width="1" height="43.0" fill="#e8e8e8"/><rect x="1015.42" y="560.5" width="1" height="43.0" fill="#e8e8e8"/><rect x="546.40" y="595.5" width="469.02" height="1" fill="#e4e4e4"/><rect x="557.50" y="594.00" width="56" height="1.50" fill="#e8e8e8"/><rect x="635.67" y="560.70" width="56" height="34.80" fill="#e8e8e8"/><rect x="713.84" y="577.20" width="56" height="18.30" fill="#e8e8e8"/><rect x="792.01" y="574.50" width="56" height="21.00" fill="#e8e8e8"/><rect x="870.18" y="586.50" width="56" height="9.00" fill="#e8e8e8"/><rect x="948.35" y="560.70" width="56" height="34.80" fill="#e8e8e8"/></svg>
<div class="t" style="left:546.4px;top:603.9px;width:78.17px;text-align:center;font-size:10px;color:#666;letter-spacing:-0.25px">Vencido</div>
<div class="t" style="left:624.6px;top:603.9px;width:78.17px;text-align:center;font-size:10px;color:#666;letter-spacing:-0.25px">3-9 jul.</div>
<div class="t" style="left:702.7px;top:603.9px;width:78.17px;text-align:center;font-size:10px;color:#666;letter-spacing:-0.25px">Esta semana</div>
<div class="t" style="left:780.9px;top:603.9px;width:78.17px;text-align:center;font-size:10px;color:#666;letter-spacing:-0.25px">17-23 jul.</div>
<div class="t" style="left:859.1px;top:603.9px;width:78.17px;text-align:center;font-size:10px;color:#666;letter-spacing:-0.25px">24-30 jul.</div>
<div class="t" style="left:937.2px;top:603.9px;width:78.17px;text-align:center;font-size:10px;color:#666;letter-spacing:-0.25px">No Vencido</div>
<div class="a" style="left:1503px;top:43px;width:15px;height:691px;background:linear-gradient(to right,rgba(60,70,80,0),rgba(60,70,80,0.11))"></div>
</body></html>
